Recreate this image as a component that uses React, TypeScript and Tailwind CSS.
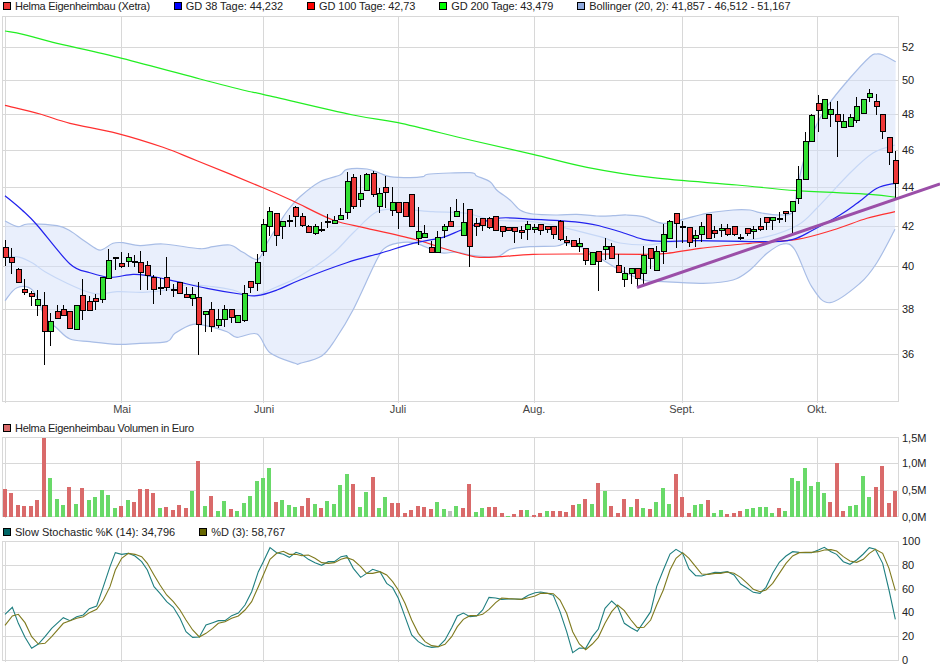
const X = (i: number) => Math.round(5 + i * 6.449);

type Candle = [number, number, number, number, string];
const CANDLES: Candle[] = [
  [247,257,240,266,'r'],[257,262,248,274,'r'],[269,282,268,282,'r'],[289,292,279,295,'r'],[293,296,291,306,'r'],
  [299,305,290,316,'g'],[305,331,292,365,'r'],[321,331,313,346,'g'],[311,318,305,318,'r'],[309,315,305,315,'r'],
  [311,328,311,328,'r'],[305,329,305,329,'g'],[295,310,279,320,'r'],[301,310,296,310,'r'],[298,301,294,310,'r'],
  [277,299,277,303,'g'],[260,278,249,278,'g'],[257,257,257,270,'k'],[263,266,252,268,'r'],[257,261,253,267,'g'],
  [261,261,255,267,'k'],[262,272,251,290,'r'],[265,275,261,290,'r'],[277,289,275,304,'r'],[287,287,278,295,'k'],
  [277,287,257,291,'r'],[289,290,284,297,'g'],[282,293,282,293,'r'],[294,297,287,297,'r'],[294,298,287,306,'g'],
  [297,324,282,355,'r'],[311,314,311,332,'g'],[309,326,302,332,'r'],[319,325,309,328,'g'],[309,319,305,327,'g'],
  [309,317,309,323,'r'],[315,322,315,322,'g'],[293,320,285,322,'g'],[281,287,281,293,'r'],[262,283,254,291,'g'],
  [224,251,219,256,'g'],[211,226,207,236,'g'],[213,235,213,246,'r'],[221,226,221,239,'g'],[220,220,215,227,'k'],
  [207,216,206,227,'r'],[216,225,213,227,'r'],[226,232,225,233,'r'],[226,233,224,235,'g'],[229,229,222,232,'k'],
  [221,221,214,228,'k'],[220,223,216,223,'g'],[215,219,208,219,'g'],[181,212,172,219,'g'],[177,206,174,209,'r'],
  [193,199,175,207,'g'],[174,190,173,190,'g'],[173,194,171,197,'r'],[193,206,188,213,'g'],[187,192,176,208,'r'],
  [202,210,187,216,'g'],[202,212,202,229,'r'],[202,216,202,216,'r'],[194,226,194,226,'r'],[231,238,207,245,'g'],
  [233,237,225,237,'g'],[247,252,241,252,'r'],[237,252,231,252,'g'],[226,230,224,238,'g'],[221,226,207,226,'r'],
  [211,216,199,216,'g'],[222,235,203,235,'g'],[209,246,209,267,'r'],[223,226,218,236,'r'],[218,225,218,231,'r'],
  [218,227,217,229,'r'],[216,230,216,231,'r'],[226,231,226,237,'r'],[227,230,227,230,'r'],[227,231,227,243,'r'],
  [230,232,226,239,'r'],[224,229,221,240,'g'],[227,229,224,233,'g'],[224,230,224,235,'r'],[226,229,226,233,'r'],
  [226,234,226,239,'r'],[221,239,220,241,'r'],[240,242,236,246,'r'],[240,246,240,246,'r'],[243,246,238,252,'g'],
  [248,260,248,265,'r'],[252,264,252,264,'g'],[251,261,251,291,'r'],[246,249,238,260,'g'],[246,258,243,258,'r'],
  [265,272,254,273,'r'],[273,279,267,287,'g'],[268,273,268,284,'g'],[268,278,268,287,'r'],[255,273,246,284,'g'],
  [248,258,248,269,'r'],[251,270,246,270,'g'],[234,251,224,264,'g'],[221,238,220,238,'g'],[213,223,213,248,'r'],
  [226,226,221,243,'k'],[227,242,227,247,'r'],[235,238,230,247,'g'],[226,234,222,242,'g'],[214,238,214,238,'r'],
  [230,233,226,238,'r'],[228,230,224,237,'g'],[228,234,224,236,'r'],[226,234,226,236,'r'],[237,237,234,240,'k'],
  [228,233,228,236,'r'],[229,231,226,239,'g'],[226,229,218,231,'r'],[217,222,217,230,'r'],[217,220,217,230,'g'],
  [218,218,212,223,'k'],[211,213,211,222,'r'],[201,211,201,233,'g'],[179,198,166,204,'g'],[141,179,132,179,'g'],
  [115,141,114,141,'g'],[103,110,95,132,'r'],[99,118,99,118,'g'],[109,114,102,127,'g'],[114,121,101,157,'r'],
  [121,127,114,127,'g'],[117,126,114,126,'g'],[106,120,97,123,'g'],[99,113,99,113,'g'],[93,97,89,102,'g'],
  [101,106,94,115,'r'],[114,131,114,139,'r'],[137,152,137,165,'r'],[160,183,151,198,'r'],
];

const VOL: [number, string][] = ([
  [222,'r'],[234,'r'],[270,'r'],[273,'r'],[273,'r'],[255,'r'],[68,'r'],[189,'g'],[252,'g'],[270,'g'],
  [216,'r'],[267,'g'],[219,'r'],[255,'g'],[246,'g'],[225,'g'],[240,'g'],[279,'g'],[273,'r'],[255,'g'],
  [261,'r'],[222,'r'],[222,'r'],[234,'r'],[279,'g'],[276,'r'],[285,'r'],[270,'r'],[279,'r'],[228,'g'],
  [138,'r'],[273,'g'],[243,'r'],[288,'g'],[258,'g'],[282,'r'],[288,'g'],[264,'g'],[243,'g'],[198,'g'],
  [189,'g'],[159,'g'],[261,'r'],[255,'g'],[270,'g'],[276,'g'],[273,'r'],[249,'r'],[267,'g'],[279,'r'],
  [258,'g'],[267,'g'],[210,'g'],[177,'g'],[207,'r'],[276,'g'],[231,'g'],[186,'r'],[279,'g'],[246,'g'],
  [264,'r'],[264,'r'],[294,'r'],[285,'r'],[273,'r'],[276,'r'],[282,'r'],[261,'g'],[282,'g'],[288,'n'],
  [273,'g'],[279,'r'],[207,'r'],[291,'g'],[279,'g'],[276,'r'],[276,'r'],[294,'r'],[303,'g'],[297,'r'],
  [285,'r'],[285,'g'],[300,'r'],[294,'r'],[288,'g'],[288,'r'],[288,'r'],[291,'r'],[270,'r'],[267,'g'],
  [252,'r'],[267,'g'],[204,'r'],[228,'g'],[273,'r'],[294,'r'],[252,'r'],[276,'g'],[252,'r'],[279,'g'],
  [282,'r'],[261,'g'],[219,'g'],[267,'g'],[177,'r'],[246,'r'],[294,'r'],[270,'g'],[267,'g'],[255,'r'],
  [294,'g'],[285,'g'],[297,'r'],[294,'r'],[288,'r'],[282,'g'],[279,'g'],[276,'g'],[276,'g'],[294,'g'],
  [279,'r'],[288,'g'],[189,'g'],[198,'g'],[159,'g'],[213,'g'],[201,'g'],[234,'g'],[261,'r'],[144,'r'],
  [288,'r'],[273,'g'],[270,'g'],[183,'g'],[246,'g'],[216,'r'],[153,'r'],[264,'r'],[228,'r'],
] as [number, string][]);

type P = [number, number];
const line = (p: P[]) => p.map(([x, y]) => `${x},${y}`).join(' ');

// Catmull-Rom smoothing for the moving averages and the bands.
const smooth = (p: P[], move = true) => {
  let d = move ? `M${p[0][0]},${p[0][1]}` : `L${p[0][0]},${p[0][1]}`;
  for (let i = 0; i < p.length - 1; i++) {
    const a = p[Math.max(i - 1, 0)], b = p[i], c = p[i + 1], e = p[Math.min(i + 2, p.length - 1)];
    const c1x = b[0] + (c[0] - a[0]) / 6, c1y = b[1] + (c[1] - a[1]) / 6;
    const c2x = c[0] - (e[0] - b[0]) / 6, c2y = c[1] - (e[1] - b[1]) / 6;
    d += `C${c1x.toFixed(1)},${c1y.toFixed(1)} ${c2x.toFixed(1)},${c2y.toFixed(1)} ${c[0]},${c[1]}`;
  }
  return d;
};

const UPPER: P[] = [[5,221],[18,226.7],[28,224],[57,225.7],[70,230.7],[83,240],[97,249.3],[103,249.3],[113,243.3],[123,242.7],[140,245.7],[163,244],[200,248.7],[213,246.7],[230,245],[243,252.3],[258,259.3],[267,243],[280,222],[288,210],[300,196.7],[320,181.7],[340,175],[347,169.3],[367,169],[380,173.3],[390,176.7],[410,177.7],[423,176.7],[430,174],[470,172.7],[476.7,176],[490,181.7],[496.7,190],[510,200],[520,210],[533,214],[556.7,215],[576.7,214.3],[596.7,216],[613,215.7],[626.7,215],[643,216.7],[663,223.3],[683,219.3],[706.7,213.3],[733,210],[750,210],[760,212.7],[780,215],[793,211.7],[797,190],[803,163],[813,133],[827,106.7],[850,78],[870,56.7],[876.7,54],[883,55],[895.7,61.7]];
const LOWER: P[] = [[5,300.7],[17,287.7],[33,290.7],[45,316.7],[57,328.3],[70,339],[90,341.7],[117,344.3],[140,343.3],[167,341.7],[175,333.3],[193,324.3],[210,326.7],[227,331.7],[237,337.3],[257,334],[270,352.7],[295,363.3],[300,363.3],[321.7,356],[335,340],[353,310],[376.7,260],[386.7,246.7],[403,242.3],[416.7,243.3],[440,252.7],[456.7,252],[470,255],[496.7,256.7],[510,249.3],[530,246.7],[556.7,246],[566.7,243.3],[583,248.3],[600,258.3],[620,270],[643,280],[663,281.7],[703,283.3],[733,280],[750,270],[767,253.3],[783,244],[795,250],[811.7,286.7],[830,302.7],[860,283.3],[876.7,263],[895,229.3]];
const MIDDLE: P[] = [[5,256],[20,257.3],[33,263.3],[45,271.7],[67,283.3],[87,291.7],[100,294],[117,291.7],[143,292.3],[167,290],[187,285],[213,286.7],[233,290],[253,296],[277,286.7],[300,276],[333,253.3],[353,233],[376.7,211.7],[400,209.3],[433,211.7],[466.7,213.3],[493,220],[533,221.7],[566.7,228.3],[600,236.7],[620,243],[647,245],[667,242.3],[693,241],[733,241],[767,236.7],[798,225],[817,208],[850,173],[873,153],[895,145]];
const MA38: P[] = [[5,195.7],[22,210],[37,225],[70,264],[90,272.7],[110,277.3],[133,274.3],[150,276],[177,281.7],[207,288.3],[240,294],[257,295.7],[277,290],[300,280],[346.7,262.7],[380,253.3],[413,243.3],[443,237.3],[463,229.3],[496.7,218.3],[533,219.3],[560,220.7],[586.7,223.3],[600,226],[620,231.7],[643,239.3],[663,241.3],[700,240.7],[767,241.7],[793,239.3],[813,230],[840,215],[857,203.3],[877,188.3],[895,183.3]];
const MA100: P[] = [[5,105.3],[40,114],[70,123.3],[117,133.3],[163,147.3],[197,160.7],[263,187.7],[293,201],[333,220],[367,228.3],[417,240],[443,248.3],[467,255],[480,257.3],[500,256.7],[533,254.3],[583,254],[643,254.3],[667,253.3],[700,248.3],[750,243.3],[797,239.3],[833,230],[867,218.3],[895,211.7]];
const MA200: P[] = [[5,31],[23,34.3],[53,42.3],[122,58.3],[200,79],[247,91],[263,94.3],[353,115],[398,122.7],[470,140],[533,154.3],[587,167.3],[653,177.7],[737,185],[797,190.7],[870,194.3],[895.7,197.3]];

const z1 = (p: P[]): P[] => p.map(([x, y]) => [x / 3, 520 + y / 3]);
const z2 = (p: P[]): P[] => p.map(([x, y]) => [470 + x / 3, 520 + y / 3]);

const K: P[] = [...z1([[15,283],[37,262],[55,310],[75,352],[95,385],[115,372],[135,350],[155,325],[190,293],[210,302],[230,290],[250,285],[268,266],[290,258],[310,200],[330,140],[346,98],[365,103],[385,100],[405,108],[425,125],[442,150],[462,200],[480,220],[500,245],[520,262],[540,295],[558,335],[578,352],[598,351],[618,315],[638,308],[655,302],[675,302],[695,287],[715,279],[735,255],[755,215],[775,155],[790,125],[810,83],[830,98],[850,103],[868,112],[888,97],[905,103],[925,118],[945,128],[965,136],[985,125],[1003,125],[1023,110],[1040,107],[1060,145],[1082,172],[1100,160],[1118,148],[1140,155],[1160,190],[1178,203],[1195,235],[1215,290],[1235,345],[1255,365],[1275,377],[1295,382],[1315,380],[1335,360],[1355,323],[1372,288],[1390,279],[1410,290]]),
  ...z2([[20,288],[38,270],[57,232],[77,234],[95,238],[115,237],[135,237],[155,238],[175,226],[195,218],[212,216],[232,220],[250,226],[270,275],[290,335],[308,398],[328,384],[347,385],[367,350],[385,327],[405,265],[425,243],[443,260],[463,310],[483,323],[502,334],[522,305],[542,275],[560,200],[580,150],[600,102],[618,88],[638,100],[657,147],[677,167],[695,168],[715,162],[735,157],[752,158],[772,155],[792,165],[812,192],[832,205],[850,217],[870,220],[888,202],[908,160],[928,127],[948,108],[968,95],[988,97],[1006,98],[1025,98],[1045,90],[1063,82],[1083,95],[1100,103],[1120,125],[1140,133],[1160,120],[1180,102],[1198,83],[1216,88],[1238,130],[1257,210],[1276,298]])];
const D: P[] = [...z1([[15,316],[37,288],[55,283],[75,308],[95,350],[115,372],[135,370],[155,350],[190,310],[210,302],[230,295],[250,290],[268,278],[290,268],[310,240],[330,200],[346,150],[365,115],[385,100],[405,103],[425,110],[442,130],[462,165],[480,195],[500,225],[520,245],[540,270],[558,300],[578,330],[598,351],[618,340],[638,325],[655,310],[675,305],[695,295],[715,288],[735,270],[755,245],[775,200],[790,165],[810,118],[830,100],[850,94],[868,103],[888,103],[905,107],[925,105],[945,115],[965,128],[985,130],[1003,128],[1023,118],[1040,113],[1060,120],[1082,140],[1100,160],[1118,160],[1140,155],[1160,165],[1178,185],[1195,210],[1215,250],[1235,300],[1255,340],[1275,365],[1295,377],[1315,380],[1335,373],[1355,350],[1372,320],[1390,298],[1410,287]]),
  ...z2([[20,287],[38,283],[57,268],[77,248],[95,234],[115,236],[135,237],[155,238],[175,233],[195,228],[212,220],[232,220],[250,221],[270,240],[290,280],[308,335],[328,372],[347,389],[367,372],[385,352],[405,310],[425,275],[443,255],[463,272],[483,300],[502,323],[522,322],[542,300],[560,255],[580,210],[600,150],[618,115],[638,98],[657,115],[677,140],[695,162],[715,163],[735,160],[752,160],[772,156],[792,160],[812,172],[832,190],[850,208],[870,215],[888,210],[908,190],[928,160],[948,130],[968,108],[988,98],[1006,97],[1025,97],[1045,95],[1063,90],[1083,89],[1100,93],[1120,110],[1140,123],[1160,127],[1180,118],[1198,100],[1216,88],[1238,100],[1257,145],[1276,212]])];

const VX = [5.5, 121.5, 263.5, 398.5, 534.5, 682.5, 817.5];
const GRID = '#d8d8d8';

function Grid({ top, bottom, hs }: { top: number; bottom: number; hs: number[] }) {
  return (
    <g stroke={GRID} strokeWidth={1} shapeRendering="crispEdges">
      <rect x={2.5} y={top} width={895.5} height={bottom - top} fill="white" />
      {hs.map((y) => <line key={y} x1={2.5} x2={898} y1={y} y2={y} />)}
      {VX.map((x) => <line key={x} x1={x} x2={x} y1={top} y2={bottom + 1} />)}
    </g>
  );
}

function AxisLabels({ items }: { items: [string, number][] }) {
  return (
    <g>
      {items.map(([t, y]) => (
        <text key={t} x={902} y={y + 4} fontSize={11} className="fill-[#222222]">{t}</text>
      ))}
    </g>
  );
}

function Legend({ items, className }: { items: [string, string, string][]; className: string }) {
  return (
    <div className={`flex items-center gap-6 pl-[3px] text-[11px] leading-3 text-[#222222] ${className}`}>
      {items.map(([label, color, tracking]) => (
        <div key={label} className="flex items-center gap-1 whitespace-nowrap">
          <span className="size-2 border border-black" style={{ backgroundColor: color }} />
          <span className={tracking}>{label}</span>
        </div>
      ))}
    </div>
  );
}

function PriceChart() {
  const hs = [47.5, 80.5, 114.5, 150.5, 187.5, 226.5, 266.5, 309.5, 354.5];
  return (
    <svg width={940} height={404} viewBox="0 16 940 404" className="block">
      <Grid top={16.5} bottom={401.5} hs={hs} />
      <path d={smooth(UPPER) + smooth([...LOWER].reverse(), false) + 'Z'} fill="#d3e0fa" fillOpacity={0.5} />
      <path d={smooth(MIDDLE)} fill="none" stroke="#c6d7f6" strokeWidth={1.2} />
      <path d={smooth(UPPER)} fill="none" stroke="#a8bde6" strokeWidth={1.2} />
      <path d={smooth(LOWER)} fill="none" stroke="#a8bde6" strokeWidth={1.2} />
      <path d={smooth(MA200)} fill="none" stroke="#22ee22" strokeWidth={1.2} />
      <path d={smooth(MA100)} fill="none" stroke="#ff3030" strokeWidth={1.2} />
      <path d={smooth(MA38)} fill="none" stroke="#2222ee" strokeWidth={1.2} />
      <g shapeRendering="crispEdges">
        {CANDLES.map(([t, b, wt, wb, c], i) => {
          const x = X(i);
          return (
            <g key={i}>
              <line x1={x + 0.5} x2={x + 0.5} y1={wt} y2={wb} stroke="black" />
              {c === 'k'
                ? <rect x={x - 2} y={t} width={6} height={2} fill="black" />
                : <rect x={x - 2} y={t + 0.5} width={5} height={b - t} fill={c === 'r' ? '#ee3838' : '#33e033'} stroke="black" />}
            </g>
          );
        })}
      </g>
      <line x1={637} y1={287.5} x2={940} y2={184} stroke="#9b4fa8" strokeWidth={3} />
      <AxisLabels items={[['52', 47], ['50', 80], ['48', 114], ['46', 150], ['44', 187], ['42', 226], ['40', 266], ['38', 309], ['36', 354]]} />
      {([['Mai', 122], ['Juni', 264], ['Juli', 398], ['Aug.', 534], ['Sept.', 682], ['Okt.', 817]] as [string, number][]).map(([t, x]) => (
        <text key={t} x={x} y={413} textAnchor="middle" fontSize={11} className="fill-[#444444]">{t}</text>
      ))}
    </svg>
  );
}

function VolumeChart() {
  return (
    <svg width={940} height={84} viewBox="0 436 940 84" className="block overflow-visible">
      <Grid top={437.5} bottom={516.5} hs={[463.5, 490.5]} />
      <g shapeRendering="crispEdges">
        {VOL.map(([top, c], i) => {
          const y = Math.round(415 + top / 3);
          return <rect key={i} x={X(i) - 2} y={y} width={4} height={517 - y} fill={c === 'r' ? '#d96a6a' : c === 'g' ? '#69d969' : '#bdbdbd'} />;
        })}
      </g>
      <AxisLabels items={[['1,5M', 437.5], ['1,0M', 463], ['0,5M', 490], ['0,0M', 516.5]]} />
    </svg>
  );
}

function StochChart() {
  return (
    <svg width={940} height={128} viewBox="0 540 940 128" className="block overflow-visible">
      <Grid top={541.5} bottom={660.5} hs={[565.5, 589.5, 612.5, 636.5]} />
      <path d={line(K).split(' ').map((s, i) => (i ? 'L' : 'M') + s).join('')} fill="none" stroke="#1f7f80" strokeWidth={1.1} />
      <path d={line(D).split(' ').map((s, i) => (i ? 'L' : 'M') + s).join('')} fill="none" stroke="#7f7a1e" strokeWidth={1.1} />
      <AxisLabels items={[['100', 541], ['80', 565], ['60', 589], ['40', 612], ['20', 636], ['0', 660]]} />
    </svg>
  );
}

export default function App() {
  return (
    <div className="flex h-[670px] w-[940px] flex-col overflow-hidden bg-white font-['Liberation_Sans',Arial,sans-serif]">
      <Legend
        className="h-3"
        items={[
          ['Helma Eigenheimbau (Xetra)', '#ee3838', 'tracking-[-0.27px]'],
          ['GD 38 Tage: 44,232', '#0000ff', 'tracking-[-0.06px]'],
          ['GD 100 Tage: 42,73', '#ff0000', 'tracking-[-0.11px]'],
          ['GD 200 Tage: 43,479', '#00ff00', 'tracking-[-0.13px]'],
          ['Bollinger (20, 2): 41,857 - 46,512 - 51,167', '#8fa9dc', 'tracking-[-0.07px]'],
        ]}
      />
      <div className="mt-1"><PriceChart /></div>
      <Legend className="mt-[1px] h-[14px]" items={[['Helma Eigenheimbau Volumen in Euro', '#d96a6a', 'tracking-[-0.3px]']]} />
      <div className="mt-[1px]"><VolumeChart /></div>
      <Legend className="mt-[5px] h-[14px]" items={[['Slow Stochastic %K (14): 34,796', '#006666', 'tracking-normal'], ['%D (3): 58,767', '#666600', 'tracking-normal']]} />
      <div className="mt-[1px]"><StochChart /></div>
    </div>
  );
}
